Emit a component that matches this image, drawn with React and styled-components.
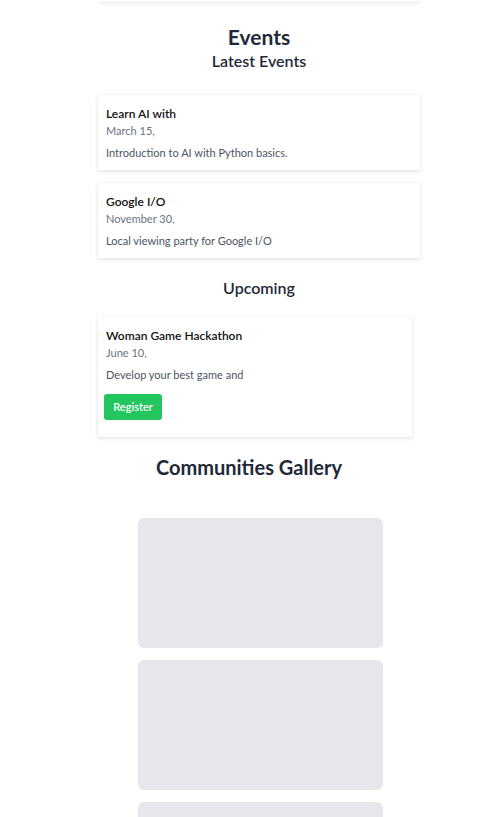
import React from "react";
import styled, { createGlobalStyle } from "styled-components";

const GlobalStyle = createGlobalStyle`
* {
  box-sizing: border-box;
  padding: 0;
  margin: 0;
}
body {
  background: #fff;
  font-family: "Source Sans Pro", Lato, "Liberation Sans", sans-serif;
  overflow: hidden;
}
`

const Page = styled.div`
    width: 322px;
    margin-left: 98px;
`

const TopEdge = styled.div`
    height: 2px;
    margin-top: -1px;
    background: #fff;
    box-shadow: 0 2px 4px rgba(0, 0, 0, 0.12);
`

const Section = styled.section`
    display: flex;
    flex-direction: column;
`

const Title = styled.h2`
    text-align: center;
    font-size: ${p => p.$size}px;
    font-weight: ${p => p.$weight || 700};
    color: #1f2937;
    line-height: 1.2;
    margin-top: ${p => p.$top || 0}px;
    margin-bottom: ${p => p.$bottom || 0}px;
    margin-left: ${p => p.$shift || 0}px;
`

const CardList = styled.div`
    display: flex;
    flex-direction: column;
    gap: 13px;
`

const Card = styled.div`
    background: #fff;
    width: ${p => p.$width || 322}px;
    padding: 11px 8px ${p => p.$pb || 10}px;
    box-shadow: 0 1px 4px rgba(0, 0, 0, 0.14);
`

const CardTitle = styled.h3`
    font-size: 12px;
    font-weight: 600;
    color: #111;
    line-height: 16px;
`

const CardDate = styled.p`
    font-size: 11px;
    color: #6b7280;
    line-height: 15px;
    margin-top: 1px;
`

const CardText = styled.p`
    font-size: 11px;
    color: #4b5563;
    line-height: 15px;
    margin-top: 7px;
`

const Button = styled.button`
    margin-top: 12px;
    margin-left: -2px;
    background: #22c55e;
    color: #fff;
    border: none;
    border-radius: 3px;
    font-family: inherit;
    font-size: 11px;
    font-weight: 600;
    width: 58px;
    height: 26px;
`

const Gallery = styled.div`
    display: flex;
    flex-direction: column;
    gap: 12px;
    margin-left: 40px;
    margin-top: 39px;
`

const Tile = styled.div`
    width: 245px;
    height: 130px;
    border-radius: 6px;
    background: #e5e7eb;
`

const latest = [
    { title: "Learn AI with", date: "March 15,", text: "Introduction to AI with Python basics." },
    { title: "Google I/O", date: "November 30,", text: "Local viewing party for Google I/O" },
]

function App() {
    return (
        <Page>
            <GlobalStyle />
            <TopEdge />

            <Section>
                <Title $size={21} $top={23}>Events</Title>
                <Title $size={16} $weight={600} $top={2} $bottom={25}>Latest Events</Title>
                <CardList>
                    {latest.map(e => (
                        <Card key={e.title}>
                            <CardTitle>{e.title}</CardTitle>
                            <CardDate>{e.date}</CardDate>
                            <CardText>{e.text}</CardText>
                        </Card>
                    ))}
                </CardList>
            </Section>

            <Section>
                <Title $size={16} $weight={600} $top={20} $bottom={19}>Upcoming</Title>
                <Card $width={314} $pb={17}>
                    <CardTitle>Woman Game Hackathon</CardTitle>
                    <CardDate>June 10,</CardDate>
                    <CardText>Develop your best game and</CardText>
                    <Button>Register</Button>
                </Card>
            </Section>

            <Section>
                <Title $size={20} $top={18} $shift={-20}>Communities Gallery</Title>
                <Gallery>
                    <Tile />
                    <Tile />
                    <Tile />
                </Gallery>
            </Section>
        </Page>
    )
}

export default App;
